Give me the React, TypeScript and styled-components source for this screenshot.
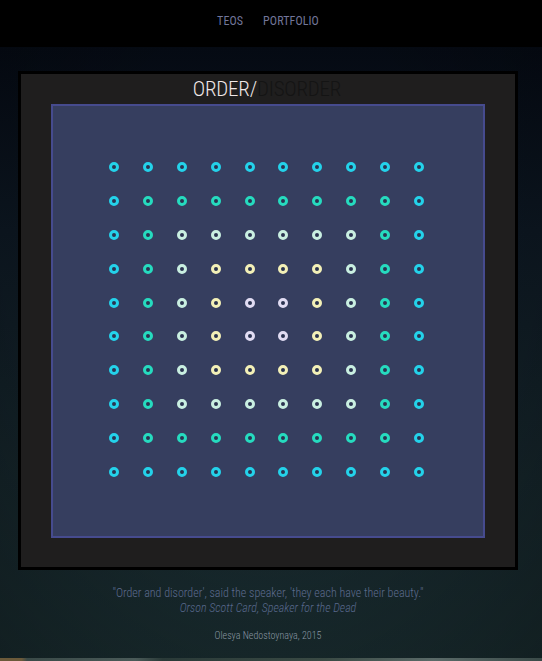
import React from "react";
import styled, { createGlobalStyle } from "styled-components";

const Global = createGlobalStyle`
  html, body { margin: 0; padding: 0; background: #000; }
  body { font-family: Roboto, "Liberation Sans", sans-serif; }
`;

const Page = styled.div`
  width: 542px;
  min-height: 661px;
  display: flex;
  flex-direction: column;
  overflow: hidden;
`;

const Header = styled.header`
  height: 47px;
  background: #000;
  display: flex;
  justify-content: center;
  align-items: center;
  gap: 20px;
  padding-right: 6px;
  padding-bottom: 6px;
  box-sizing: border-box;
`;

const NavLink = styled.a`
  font-family: Roboto, sans-serif;
  font-size: 12px;
  font-weight: 400;
  font-stretch: 80%;
  color: #72769a;
  text-decoration: none;
  letter-spacing: 0.1px;
`;

const Main = styled.main`
  flex: 1;
  background:
    radial-gradient(ellipse at 50% 40%, rgba(20, 30, 40, 0) 50%, rgba(0, 0, 0, 0.25) 100%),
    linear-gradient(180deg, #050a13 0%, #0c1620 30%, #142328 70%, #182a2d 100%);
  padding-top: 24px;
  display: flex;
  flex-direction: column;
`;

const Frame = styled.section`
  width: 500px;
  margin-left: 18px;
  border: 3px solid #000;
  background: #1f1e1e;
  padding: 0 30px 29px;
  box-sizing: border-box;
  display: flex;
  flex-direction: column;
  align-items: center;
`;

const Title = styled.h1`
  margin: 0;
  height: 30px;
  line-height: 31px;
  font-family: Roboto, sans-serif;
  font-weight: 300;
  font-size: 21px;
  font-stretch: 80%;
  letter-spacing: -0.2px;
  padding-right: 2px;
`;

const Word = styled.span<{ $light?: boolean }>`
  color: ${(p) => (p.$light ? "#efe7e7" : "#141414")};
`;

const Board = styled.div`
  width: 434px;
  height: 434px;
  box-sizing: border-box;
  background: #363e5f;
  border: 2px solid #464b8e;
  display: grid;
  grid-template-columns: repeat(10, 33.9px);
  grid-template-rows: repeat(10, 33.9px);
  padding: 44px 0 0 44px;
`;

const Cell = styled.div`
  display: flex;
  align-items: center;
  justify-content: center;
`;

const Dot = styled.span<{ $color: string }>`
  width: 10px;
  height: 10px;
  box-sizing: border-box;
  border-radius: 50%;
  border: 3px solid ${(p) => p.$color};
  background: #2a3350;
`;

const Footer = styled.footer`
  display: flex;
  flex-direction: column;
  align-items: center;
  padding-top: 16px;
  padding-right: 6px;
`;

const Quote = styled.p`
  margin: 0;
  font-family: Roboto, sans-serif;
  font-weight: 300;
  font-size: 12px;
  font-stretch: 80%;
  line-height: 15px;
  color: #5d6b8e;
  text-align: center;
`;

const Source = styled(Quote)`
  font-style: italic;
  color: #58688c;
`;

const Credit = styled.p`
  margin: 14px 0 0;
  font-family: Roboto, sans-serif;
  font-weight: 300;
  font-size: 10px;
  font-stretch: 80%;
  line-height: 12px;
  color: #8a97a3;
`;

const NextStrip = styled.div`
  margin-top: auto;
  height: 3px;
  background: linear-gradient(90deg, #6b5a3a 0%, #6b5a3a 4%, #3a4a48 5%, #4a5a58 25%, #2a3a38 30%, #3a4a44 60%, #5a6a68 80%, #3a4a48 100%);
`;

const ringColors = ["#24d2ea", "#26dbbf", "#c9efe1", "#f3f0b7", "#e1dcf3"];

const dots = Array.from({ length: 100 }, (_, i) => {
  const r = Math.floor(i / 10);
  const c = i % 10;
  const ring = Math.min(r, c, 9 - r, 9 - c);
  return ringColors[ring];
});

export default function App() {
  return (
    <Page>
      <Global />
      <Header>
        <NavLink href="#">TEOS</NavLink>
        <NavLink href="#">PORTFOLIO</NavLink>
      </Header>
      <Main>
        <Frame>
          <Title>
            <Word $light>ORDER/</Word>
            <Word>DISORDER</Word>
          </Title>
          <Board>
            {dots.map((color, i) => (
              <Cell key={i}>
                <Dot $color={color} />
              </Cell>
            ))}
          </Board>
        </Frame>
        <Footer>
          <Quote>"Order and disorder', said the speaker, 'they each have their beauty."</Quote>
          <Source>Orson Scott Card, Speaker for the Dead</Source>
          <Credit>Olesya Nedostoynaya, 2015</Credit>
        </Footer>
        <NextStrip />
      </Main>
    </Page>
  );
}
